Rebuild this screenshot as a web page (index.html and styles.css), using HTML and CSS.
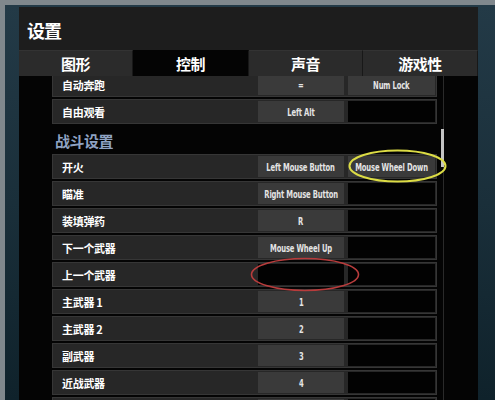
FILE: index.html
```html
<!DOCTYPE html>
<html lang="zh">
<head>
  <meta charset="UTF-8" />
  <title>设置</title>
  <link rel="stylesheet" href="styles.css">
</head>
<body>
  <div class="desk">
    <div class="panel">
      <header class="head"><h1>设置</h1></header>

      <nav class="tabs">
        <div class="tab">图形</div>
        <div class="tab active">控制</div>
        <div class="tab">声音</div>
        <div class="tab">游戏性</div>
      </nav>

      <div class="body">
        <div class="list">
          <div class="row">
            <div class="label">自动奔跑</div>
            <div class="key"><span>=</span></div>
            <div class="key alt"><span>Num Lock</span></div>
          </div>
          <div class="row">
            <div class="label">自由观看</div>
            <div class="key"><span>Left Alt</span></div>
            <div class="key alt empty"></div>
          </div>

          <div class="section">战斗设置</div>

          <div class="row">
            <div class="label">开火</div>
            <div class="key"><span>Left Mouse Button</span></div>
            <div class="key alt"><span>Mouse Wheel Down</span></div>
          </div>
          <div class="row">
            <div class="label">瞄准</div>
            <div class="key"><span>Right Mouse Button</span></div>
            <div class="key alt empty"></div>
          </div>
          <div class="row">
            <div class="label">装填弹药</div>
            <div class="key"><span>R</span></div>
            <div class="key alt empty"></div>
          </div>
          <div class="row">
            <div class="label">下一个武器</div>
            <div class="key"><span>Mouse Wheel Up</span></div>
            <div class="key alt empty"></div>
          </div>
          <div class="row">
            <div class="label">上一个武器</div>
            <div class="key empty"></div>
            <div class="key alt empty"></div>
          </div>
          <div class="row">
            <div class="label">主武器 1</div>
            <div class="key"><span>1</span></div>
            <div class="key alt empty"></div>
          </div>
          <div class="row">
            <div class="label">主武器 2</div>
            <div class="key"><span>2</span></div>
            <div class="key alt empty"></div>
          </div>
          <div class="row">
            <div class="label">副武器</div>
            <div class="key"><span>3</span></div>
            <div class="key alt empty"></div>
          </div>
          <div class="row">
            <div class="label">近战武器</div>
            <div class="key"><span>4</span></div>
            <div class="key alt empty"></div>
          </div>
          <!-- next row, scrolled below the fold -->
          <div class="row">
            <div class="label"></div>
            <div class="key"></div>
            <div class="key alt empty"></div>
          </div>
        </div>

        <div class="scroll"><div class="thumb"></div></div>
      </div>
    </div>
  </div>

  <!-- hand-drawn marks on the screenshot -->
  <svg class="marks" width="495" height="400" viewBox="0 0 495 400">
    <ellipse cx="397.5" cy="166" rx="48" ry="15.5" fill="none" stroke="#dcdc45" stroke-width="2" />
    <ellipse cx="305" cy="274.5" rx="53.5" ry="16" fill="none" stroke="#b83c3c" stroke-width="1.6" />
  </svg>
</body>
</html>
```

FILE: styles.css
```css
* {
  box-sizing: border-box;
  margin: 0;
  padding: 0;
}

html, body {
  width: 495px;
  height: 400px;
  overflow: hidden;
  background: #80888d;
  font-family: "Noto Sans CJK SC", "DejaVu Sans", sans-serif;
  color: #fff;
}

body {
  position: relative;
}

.desk {
  height: 395px;
  margin: 5px 0 0 5px;
  padding: 2px 17px 0 14px;
  background: linear-gradient(180deg, #233a47 0%, #1a2f3a 50%, #0f222b 100%);
}

.panel {
  width: 459px;
  height: 393px;
  display: flex;
  flex-direction: column;
  background: #1d1d1d;
}

.head {
  height: 43px;
  padding-left: 8px;
  display: flex;
  align-items: center;
}

.head h1 {
  font-size: 18px;
  font-weight: 700;
  letter-spacing: -1px;
  padding-top: 2px;
}

.tabs {
  height: 26px;
  display: grid;
  grid-template-columns: 114px 116px 114px 115px;
}

.tab {
  display: flex;
  align-items: center;
  justify-content: center;
  background: #2b2b2b;
  border-right: 1px solid #181818;
  border-top: 1px solid #333;
  font-size: 15px;
  font-weight: 700;
  letter-spacing: -0.5px;
}

.tab.active {
  background: #040404;
  border-top-color: #040404;
}

.body {
  flex: 1;
  display: flex;
  overflow: hidden;
  background: #040404;
}

.list {
  width: 385px;
  margin: -4px 0 0 33px;
  display: flex;
  flex-direction: column;
  gap: 2px;
}

.row {
  height: 25px;
  flex: none;
  display: flex;
  padding: 1px 1px 1px 0;
  background: #272727;
  border: 1px solid #363636;
}

.label {
  flex: 1;
  padding-left: 9px;
  display: flex;
  align-items: center;
  font-size: 11px;
  font-weight: 700;
  letter-spacing: -0.3px;
}

.key {
  width: 86px;
  display: flex;
  align-items: center;
  justify-content: center;
  background: #3a3a3a;
  color: #e4e4e4;
  font-family: "DejaVu Sans Condensed", "DejaVu Sans", sans-serif;
  font-stretch: condensed;
  font-size: 10.5px;
  font-weight: 700;
  letter-spacing: -0.2px;
  white-space: nowrap;
}

.key span {
  display: inline-block;
  transform: scaleX(0.72);
}

.key.alt {
  width: 87px;
  margin-left: 4px;
}

.key.empty {
  background: #020202;
}

.section {
  height: 26px;
  flex: none;
  padding: 2px 0 0 3px;
  display: flex;
  align-items: center;
  font-size: 15px;
  font-weight: 700;
  letter-spacing: -0.5px;
  color: #8fa3c3;
}

.scroll {
  width: 3px;
  margin-left: 4px;
  background: linear-gradient(to right, transparent 2px, #2a2a2a 2px);
}

.thumb {
  height: 38px;
  margin-top: 53px;
  background: #c4c4c4;
}

.marks {
  position: absolute;
  top: 0;
  left: 0;
  pointer-events: none;
}
```
